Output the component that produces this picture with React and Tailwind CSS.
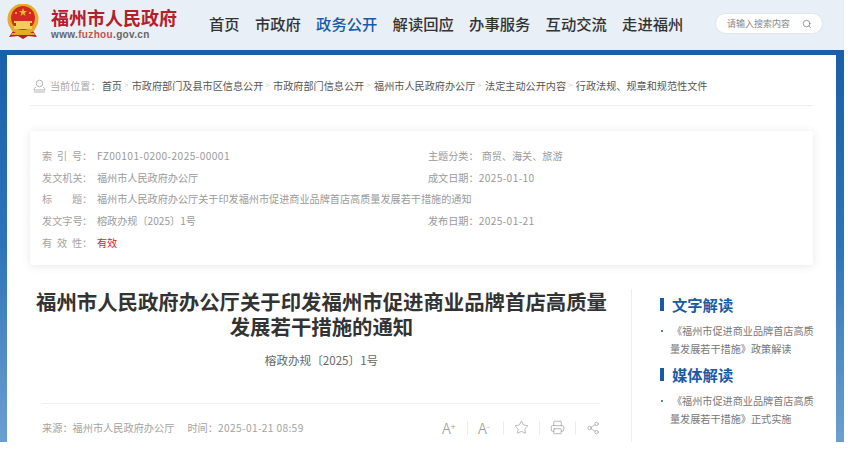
import { Search, Star, Printer, Share2 } from "lucide-react";

const COLON = "\uFF1A";

const navItems = ["首页", "市政府", "政务公开", "解读回应", "办事服务", "互动交流", "走进福州"];

const crumbs = [
  "首页",
  "市政府部门及县市区信息公开",
  "市政府部门信息公开",
  "福州市人民政府办公厅",
  "法定主动公开内容",
  "行政法规、规章和规范性文件",
];

function Emblem() {
  return (
    <svg width="34" height="36" viewBox="0 0 34 36" className="-mt-[7px] shrink-0">
      <path d="M7 27 L3 33 L12 32 L17 35 L22 32 L31 33 L27 27 Z" fill="#b3201f" />
      <path d="M6 29 L28 29 L29 31 L5 31 Z" fill="#e0a92c" />
      <circle cx="17" cy="15" r="15.5" fill="#e8aa2a" />
      <circle cx="17" cy="14" r="12" fill="#d32a1f" />
      <path d="M17 4 l1 3 h3 l-2.5 2 1 3 -2.5 -2 -2.5 2 1 -3 -2.5 -2 h3 z" fill="#f0c03c" />
      <circle cx="10" cy="9" r="1" fill="#f0c03c" />
      <circle cx="24" cy="9" r="1" fill="#f0c03c" />
      <path d="M8 17 h18 v2 h-2 v3 h2 v3 H8 v-3 h2 v-3 H8 z" fill="#f3cd5a" />
      <path d="M4 23 Q17 32 30 23 L28 27 Q17 33 6 27 Z" fill="#e8aa2a" />
    </svg>
  );
}

function UserIcon() {
  return (
    <svg width="13" height="14" viewBox="0 0 13 14" fill="none" stroke="#b5b5b5" strokeWidth="1" className="shrink-0">
      <circle cx="6.5" cy="4.5" r="3.3" />
      <path d="M3 8 C1.5 9 1 10 1 11 H12 C12 10 11.5 9 10 8" />
      <path d="M1 13 H12" />
    </svg>
  );
}

function Label({ text }) {
  return (
    <span className="flex w-[55px] shrink-0 text-[#a3a3a3]">
      <span className="flex w-[40px] justify-between">
        {text.split("").map((c, i) => (
          <span key={i}>{c}</span>
        ))}
      </span>
      <span>{COLON}</span>
    </span>
  );
}

function Divider() {
  return <span className="h-[14px] w-px bg-[#ececec]" />;
}

function ReadingBlock({ title, lines, className }) {
  return (
    <div className={className}>
      <div className="flex h-[18px] items-center gap-[8px]">
        <span className="h-[13px] w-[4px] bg-[#1a5ba6]" />
        <span className="text-[15.3px] font-bold leading-[18px] text-[#1a5ba6]">{title}</span>
      </div>
      <div className="relative mt-[9px] pl-[10px] text-[10.15px] leading-[18px] text-[#777]">
        <span className="absolute left-[1px] top-[8px] h-[2px] w-[2px] rounded-full bg-[#1a5ba6]" />
        <p className="whitespace-nowrap pl-[2px]">{lines[0]}</p>
        <p className="whitespace-nowrap">{lines[1]}</p>
      </div>
    </div>
  );
}

function App() {
  return (
    <div
      className="h-[449px] w-[848px] overflow-hidden bg-white"
      style={{ fontFamily: '"Noto Sans CJK SC", "Noto Sans", sans-serif' }}
    >
      <div className="h-[442px] w-[844px] overflow-hidden">
        <header className="flex h-[50px] items-center bg-[#e8eff7] pl-[6px] pr-[21px]">
          <Emblem />
          <div className="ml-[11px] -mt-[4px] w-[150px]">
            <div className="text-[18px] font-bold leading-[24px] text-[#b3202a]">福州市人民政府</div>
            <div
              className="-mt-[1px] text-[10px] font-bold leading-[13px] tracking-[0.35px] text-[#666]"
              style={{ fontFamily: '"Liberation Sans", sans-serif' }}
            >
              www.<span className="text-[#c6534f]">fuzhou</span>.gov.cn
            </div>
          </div>
          <nav className="ml-[8px] -mt-[4px] flex gap-[15.3px] text-[15.3px] font-medium text-[#333]">
            {navItems.map((item) => (
              <span key={item} className={item === "政务公开" ? "text-[#1a5ba6]" : ""}>
                {item}
              </span>
            ))}
          </nav>
          <div className="ml-auto -mt-[3px] flex h-[21px] w-[108px] items-center justify-between rounded-full border border-[#dfe6ee] bg-white pl-[11px] pr-[10px] text-[9px] text-[#888]">
            <span>请输入搜索内容</span>
            <Search size={10} strokeWidth={1.5} color="#666" />
          </div>
        </header>
        <div className="h-[5px] bg-[#1a5fa8]" />
        <div className="h-[387px] bg-gradient-to-b from-[#1b5fa9] via-[#2f74b8] to-[#6c9fd0] pl-[7px] pr-[8px]">
          <main className="h-full overflow-hidden bg-white px-[23px]">
            <div className="flex h-[51px] items-center border-b border-[#eee] pl-[3px] pt-[11px] text-[10.15px] text-[#555]">
              <UserIcon />
              <span className="ml-[4px] mr-[1px] text-[#aaa]">当前位置{COLON}</span>
              {crumbs.map((c, i) => (
                <span key={c} className="flex items-center whitespace-nowrap">
                  {c}
                  {i < crumbs.length - 1 && (
                    <span className="w-[9.8px] pl-[2px] text-[8px] text-[#ccc]">&gt;</span>
                  )}
                </span>
              ))}
            </div>

            <section className="mt-[25px] h-[134px] rounded-[2px] px-[12px] pt-[14px] text-[10.15px] leading-[21.7px] text-[#9a9a9a] shadow-[0_1px_10px_rgba(0,0,0,0.1)]">
              <div className="grid grid-cols-[386px_1fr]">
                <div className="flex"><Label text="索引号" /><span className="tracking-[0.43px]">FZ00101-0200-2025-00001</span></div>
                <div>主题分类{COLON}<span className="ml-[3px]">商贸、海关、旅游</span></div>
                <div className="flex"><Label text="发文机关" />福州市人民政府办公厅</div>
                <div>成文日期{COLON}<span className="tracking-[0.4px]">2025-01-10</span></div>
                <div className="col-span-2 flex"><Label text="标题" />福州市人民政府办公厅关于印发福州市促进商业品牌首店高质量发展若干措施的通知</div>
                <div className="flex"><Label text="发文字号" />榕政办规〔2025〕1号</div>
                <div>发布日期{COLON}<span className="tracking-[0.4px]">2025-01-21</span></div>
                <div className="flex"><Label text="有效性" /><span className="text-[#e0202c]">有效</span></div>
              </div>
            </section>

            <div className="mt-[24px] flex">
              <article className="ml-[6px] w-[571px] shrink-0">
                <h1 className="text-center text-[20.4px] font-bold leading-[25px] text-[#333]">
                  福州市人民政府办公厅关于印发福州市促进商业品牌首店高质量发展若干措施的通知
                </h1>
                <p className="mt-[12px] text-center text-[11.6px] leading-[18px] text-[#666]">榕政办规〔2025〕1号</p>
                <div className="ml-[6px] mr-[7px] mt-[34px] flex h-[48px] items-center justify-between border-t border-[#eee] text-[10.2px] text-[#a3a3a3]">
                  <span className="flex gap-[13px]">
                    <span>来源{COLON}福州市人民政府办公厅</span>
                    <span>时间{COLON}<span className="tracking-[0.35px]">2025-01-21 08:59</span></span>
                  </span>
                  <div className="flex items-center gap-[10px] text-[#8f8f8f]">
                    <span className="w-[15px] text-[15px] font-light leading-none">A<sup className="text-[9px]">+</sup></span>
                    <Divider />
                    <span className="w-[15px] text-[15px] font-light leading-none">A<sup className="text-[9px]">-</sup></span>
                    <Divider />
                    <Star size={15} strokeWidth={1} />
                    <Divider />
                    <Printer size={15} strokeWidth={1} />
                    <Divider />
                    <Share2 size={14} strokeWidth={1} />
                  </div>
                </div>
              </article>
              <aside className="ml-[24px] flex-1 border-l border-[#eee] pl-[28px] pt-[6px]">
                <ReadingBlock title="文字解读" lines={["《福州市促进商业品牌首店高质", "量发展若干措施》政策解读"]} />
                <ReadingBlock className="mt-[7px]" title="媒体解读" lines={["《福州市促进商业品牌首店高质", "量发展若干措施》正式实施"]} />
              </aside>
            </div>
          </main>
        </div>
      </div>
    </div>
  );
}

export default App;
